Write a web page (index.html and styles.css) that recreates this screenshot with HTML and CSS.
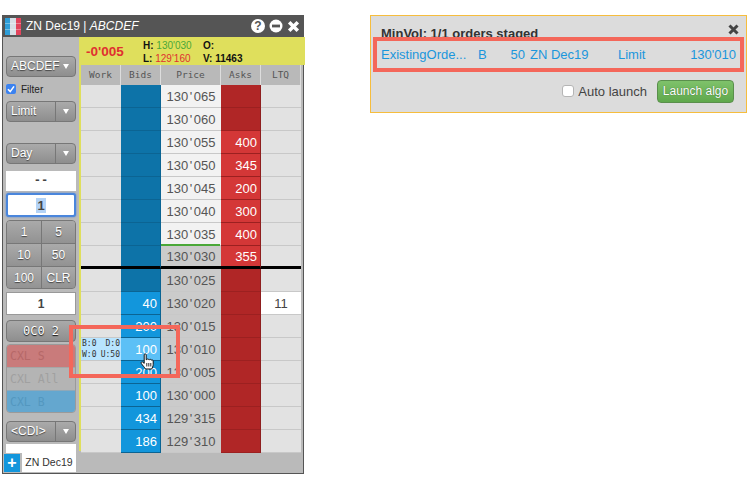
FILE: index.html
```html
<!DOCTYPE html>
<html lang="en">
<head>
<meta charset="utf-8">
<title>ZN Dec19 MD Trader</title>
<link rel="stylesheet" href="styles.css">
</head>
<body>
<div class="window">
  <div class="titlebar">
    <svg class="logo" width="16" height="17" viewBox="0 0 16 17"><rect width="5" height="17" fill="#2f9ed8"/><rect x="5" width="6" height="17" fill="#d7dfe6"/><rect x="11" width="5" height="17" fill="#e2445c"/><rect y="5" width="16" height="1" fill="#fff" opacity=".35"/><rect y="11" width="16" height="1" fill="#fff" opacity=".35"/></svg>
    <span class="title">ZN Dec19 | <i>ABCDEF</i></span>
    <span class="winbtns">
      <span class="wb">?</span>
      <svg width="14" height="14" viewBox="0 0 14 14"><circle cx="7" cy="7" r="6.5" fill="#fff"/><rect x="3" y="5.6" width="8" height="2.8" fill="#555"/></svg>
      <svg width="13" height="13" viewBox="0 0 13 13"><path d="M2.200 2.200 L10.800 10.800 M10.800 2.200 L2.200 10.800" stroke="#fff" stroke-width="3.500"/></svg>
    </span>
  </div>
  <div class="main">
    <aside class="side">
      <div class="btn dd wide">ABCDEF <span class="caret"></span></div>
      <label class="filter"><span class="check"><svg width="10" height="10" viewBox="0 0 10 10"><path d="M2 5.2 L4.2 7.6 L8 2.4" stroke="#fff" stroke-width="1.6" fill="none"/></svg></span>Filter</label>
      <div class="btn split s-limit"><span class="sl">Limit</span><span class="sr"><span class="caret"></span></span></div>
      <div class="btn split s-day"><span class="sl">Day</span><span class="sr"><span class="caret"></span></span></div>
      <div class="field dash">--</div>
      <div class="field qty"><span class="sel">1</span></div>
      <div class="pad">
        <span>1</span><span>5</span><span>10</span><span>50</span><span>100</span><span>CLR</span>
      </div>
      <div class="field total">1</div>
      <div class="btn oco">0C0 2</div>
      <div class="cxl">
        <span class="cs">CXL S</span><span class="ca">CXL All</span><span class="cb">CXL B</span>
      </div>
      <div class="btn split s-cdi"><span class="sl">&lt;CDI&gt;</span><span class="sr"><span class="caret"></span></span></div>
      <div class="tabtop"></div>
    </aside>
    <div class="stripe"></div>
    <div class="ladder">
      <div class="info">
        <div class="ltp">-0'005</div>
        <div class="stats">
          <span><b>H:</b> <em class="g">130'030</em></span><span><b>O:</b></span>
          <span><b>L:</b> <em class="r">129'160</em></span><span><b>V: 11463</b></span>
        </div>
      </div>
      <div class="row head"><div>Work</div><div>Bids</div><div>Price</div><div>Asks</div><div>LTQ</div></div>
      <div class="row"><div class="w"></div><div class="b"></div><div class="p up">130<i>'</i>065</div><div class="a"></div><div class="l"></div></div>
      <div class="row"><div class="w"></div><div class="b"></div><div class="p up">130<i>'</i>060</div><div class="a"></div><div class="l"></div></div>
      <div class="row"><div class="w"></div><div class="b"></div><div class="p up">130<i>'</i>055</div><div class="a on">400</div><div class="l"></div></div>
      <div class="row"><div class="w"></div><div class="b"></div><div class="p up">130<i>'</i>050</div><div class="a on">345</div><div class="l"></div></div>
      <div class="row"><div class="w"></div><div class="b"></div><div class="p up">130<i>'</i>045</div><div class="a on">200</div><div class="l"></div></div>
      <div class="row"><div class="w"></div><div class="b"></div><div class="p up">130<i>'</i>040</div><div class="a on">300</div><div class="l"></div></div>
      <div class="row"><div class="w"></div><div class="b"></div><div class="p up">130<i>'</i>035</div><div class="a on">400</div><div class="l"></div></div>
      <div class="row mid"><div class="w"></div><div class="b"></div><div class="p high">130<i>'</i>030</div><div class="a on">355</div><div class="l"></div></div>
      <div class="row"><div class="w"></div><div class="b"></div><div class="p">130<i>'</i>025</div><div class="a"></div><div class="l"></div></div>
      <div class="row"><div class="w"></div><div class="b on">40</div><div class="p">130<i>'</i>020</div><div class="a"></div><div class="l last">11</div></div>
      <div class="row"><div class="w"></div><div class="b on">200</div><div class="p">130<i>'</i>015</div><div class="a"></div><div class="l"></div></div>
      <div class="row"><div class="w tip"><span>B:0</span><span>D:0</span><span>W:0</span><span>U:50</span></div><div class="b on hov">100</div><div class="p">130<i>'</i>010</div><div class="a"></div><div class="l"></div></div>
      <div class="row"><div class="w"></div><div class="b on">200</div><div class="p">130<i>'</i>005</div><div class="a"></div><div class="l"></div></div>
      <div class="row"><div class="w"></div><div class="b on">100</div><div class="p">130<i>'</i>000</div><div class="a"></div><div class="l"></div></div>
      <div class="row"><div class="w"></div><div class="b on">434</div><div class="p">129<i>'</i>315</div><div class="a"></div><div class="l"></div></div>
      <div class="row"><div class="w"></div><div class="b on">186</div><div class="p">129<i>'</i>310</div><div class="a"></div><div class="l"></div></div>
      <svg class="hand" width="15" height="18" viewBox="0 0 15 18"><path d="M4.2 1.8c0-1.2 2-1.2 2 0v5l.6-.2c.3-1 1.8-.9 2 .1l.5.1c.4-.8 1.8-.6 1.9.4.5-.6 2-.3 2 .8v3.4c0 2-1 3.4-1.5 4.6H5.4C4.6 14.200 2.600 12.500 1.300 10.500c-.7-1.200.6-2.200 1.600-1.300l1.300 1.200z" fill="#fff" stroke="#111" stroke-width="1"/><path d="M6.800 10v3.500M8.800 10v3.500M10.800 10v3.500" stroke="#111" stroke-width=".9"/></svg>
      <div class="callout"></div>
    </div>
  </div>
  <div class="footer">
    <span class="plus">+</span>
    <span class="tab">ZN Dec19</span>
  </div>
</div>
<section class="panel">
  <svg class="close" width="11" height="11" viewBox="0 0 11 11"><path d="M1.500 1.500 L9.500 9.500 M9.500 1.500 L1.500 9.500" stroke="#444" stroke-width="3"/></svg>
  <h2>MinVol: 1/1 orders staged</h2>
  <div class="order">
    <span>ExistingOrde...</span><span>B</span><span class="n">50</span><span>ZN Dec19</span><span>Limit</span><span class="n">130'010</span>
  </div>
  <div class="actions">
    <label class="auto"><span class="box"></span>Auto launch</label>
    <span class="launch">Launch algo</span>
  </div>
  <div class="mark"></div>
</section>
</body>
</html>
```

FILE: styles.css
```css
* { box-sizing: border-box; }
html, body { margin: 0; padding: 0; background: #fff; }
body {
  width: 749px; height: 488px; overflow: hidden;
  display: flex; align-items: flex-start;
  padding: 15px 0 0 2px;
  font-family: "Liberation Sans", Arial, sans-serif;
  font-size: 13px; color: #444;
}
.window {
  width: 302px; height: 459px; flex: none;
  border: 1px solid #555; border-top: 0;
  background: #bababa;
  display: flex; flex-direction: column;
}
.titlebar {
  height: 22px; background: #555; color: #fff;
  display: flex; align-items: center;
  margin: 0 -1px; padding: 0 4px 0 3px; flex: none;
}
.logo { display: block; }
.title { margin-left: 5px; font-size: 12px; }
.winbtns { margin-left: auto; display: flex; align-items: center; gap: 4px; }
.wb {
  width: 14px; height: 14px; border-radius: 50%; background: #fff; color: #555;
  font-weight: bold; font-size: 12px; line-height: 14px; text-align: center;
}
.main { display: flex; height: 416px; flex: none; }
.side {
  width: 76px; flex: none; padding: 19px 3px 0 3px;
  display: flex; flex-direction: column;
}
.btn {
  height: 21px; border: 1px solid #777; border-radius: 4px;
  background: linear-gradient(#aaa, #8e8e8e);
  color: #fff; text-shadow: 0 1px 1px #444;
  font-size: 12px; line-height: 19px; flex: none;
}
.dd { display: flex; align-items: center; justify-content: space-between; padding: 0 6px 0 4px; }
.caret {
  display: block; width: 0; height: 0;
  border-left: 3.500px solid transparent; border-right: 3.500px solid transparent;
  border-top: 5px solid #fff;
}
.filter { display: flex; align-items: center; height: 14px; margin-top: 5px; font-size: 10px; color: #222; }
.check {
  width: 10px; height: 10px; background: #3b82f0; border-radius: 2px; margin-right: 5px;
  display: block;
}
.check svg { display: block; }
.split { display: flex; }
.sl { flex: 1; padding-left: 4px; border-right: 1px solid #777; }
.sr { width: 19px; display: flex; align-items: center; justify-content: center; }
.s-limit { margin-top: 5px; }
.s-day { margin-top: 21px; }
.s-cdi { margin-top: 8px; }
.field {
  background: #fff; text-align: center; flex: none; color: #444;
}
.dash { height: 20px; margin-top: 7px; line-height: 20px; font-family: "Liberation Mono", monospace; font-weight: bold; font-size: 12px; }
.qty {
  height: 24px; margin-top: 2px; border: 2px solid #4a86dc; border-radius: 3px;
  box-shadow: 0 0 2px #4a86dc; line-height: 21px; font-weight: bold; font-size: 13px;
}
.sel { background: #b4d3f6; padding: 0 1px; }
.pad {
  height: 69px; margin-top: 3px; flex: none;
  display: grid; grid-template-columns: 35px 33px; grid-auto-rows: 23px;
  border: 1px solid #777; border-radius: 4px; overflow: hidden;
  background: linear-gradient(#a2a2a2, #8e8e8e);
}
.pad span {
  text-align: center; line-height: 23px; color: #fff; font-size: 12px;
  text-shadow: 0 1px 1px #444;
  border-right: 1px solid #777; border-bottom: 1px solid #777;
  background: linear-gradient(#aaa, #929292);
}
.pad span:nth-child(2n) { border-right: 0; }
.total { height: 23px; margin-top: 3px; line-height: 22px; border: 1px solid #999; font-weight: bold; font-size: 12px; }
.oco {
  margin-top: 5px; height: 22px; text-align: center;
  font-family: "DejaVu Sans Mono", monospace; font-size: 12px; line-height: 20px;
  text-shadow: 0 1px 1px #111;
}
.cxl {
  height: 69px; margin-top: 2px; flex: none; border-radius: 4px; overflow: hidden;
  display: flex; flex-direction: column; border: 1px solid #9a9a9a;
  font-family: "DejaVu Sans Mono", monospace; font-size: 11.500px;
}
.cxl span { flex: 1; line-height: 22px; padding-left: 3px; }
.cs { background: #c97b7b; color: #b66868; }
.ca { background: #b4b4b4; color: #a0a0a0; border-top: 1px solid #a6a6a6; border-bottom: 1px solid #8fa8b8; }
.cb { background: #64a7cf; color: #5397bf; }
.tabtop { height: 9px; margin-top: 2px; background: #fff; flex: none; }
.stripe { width: 2px; background: #dfdf5c; height: 414px; flex: none; }
.ladder { width: 222px; flex: none; position: relative; }
.info {
  height: 28px; margin-right: -2px; background: #dfdf5c;
  display: flex; align-items: center; padding-left: 5px;
}
.ltp { color: #e03030; font-weight: bold; font-size: 13.500px; width: 57px; }
.stats {
  display: grid; grid-template-columns: 60px auto; line-height: 13px;
  font-size: 10px; color: #111; margin-top: 2px;
}
.stats em { font-style: normal; font-weight: normal; }
.g { color: #4aa838; }
.r { color: #e03030; }
.row {
  display: grid; grid-template-columns: 40px 40px 60px 40px 40px;
  grid-template-rows: 23px;
  height: 23px;
}
.row > div { height: 23px; border-bottom: 1px solid #c8c8c8; text-align: right; line-height: 23px; }
.head { height: 20px; grid-template-rows: 20px; }
.row.head > div {
  height: 20px;
  background: #b9b9b9; border-right: 1px solid #ddd; border-bottom: 0;
  text-align: center; line-height: 19px;
  font-family: "DejaVu Sans Mono", monospace; font-size: 9.500px; color: #555;
}
.w, .l { background: #e2e2e2; }
.row > .l { text-align: center; }
.row > .l.last { background: #fff; color: #444; }
.row > .b { background: #0d73a8; border-bottom-color: #0b6493; border-right: 1px solid #0b6493; color: #fff; padding-right: 3px; }
.row > .b.on { background: #1296dc; }
.row > .b.hov { background: #5cc0f6; }
.row > .p {
  background: #cbcbcb; text-align: center; color: #555;
  font-size: 13px;
}
.p i { font-style: normal; margin: 0 1.500px; }
.row > .p.up { background: #f2f2f2; }
.row > .a { background: #b02626; border-bottom-color: #9c2020; border-right: 1px solid #8e1e1e; color: #fff; padding-right: 3px; }
.row > .a.on { background: #d43737; }
.row.mid > div { border-bottom: 3px solid #000; line-height: 22px; }
.row.mid > .p { position: relative; }
.row.mid > .p::before {
  content: ""; position: absolute; left: 0; right: 1px; top: -2px; height: 2px; background: #4aa838;
}
.row > .tip {
  background: #b8e4ff; display: grid; grid-template-columns: auto auto; justify-content: space-between;
  align-content: center; padding: 0 1px; text-align: left;
  font-family: "DejaVu Sans Mono", monospace; font-size: 8px; line-height: 11px; color: #333;
}
.tip span:nth-child(2n) { text-align: right; }
.hand { position: absolute; left: 59px; top: 316px; }
.callout {
  position: absolute; left: -12px; top: 288px; width: 111px; height: 53px;
  border: 4px solid #f4675a;
}
.footer { position: relative; height: 21px; flex: none; display: flex; align-items: flex-start; padding-left: 1px; }
.plus {
  width: 16px; height: 18px; margin-top: 1px; background: #1296dc; color: #fff;
  font-weight: bold; text-align: center; line-height: 17px; font-size: 16px;
}
.tab {
  margin-left: 2px; width: 54px; height: 19px; background: #fff; color: #333;
  font-size: 10.500px; line-height: 19px; text-align: center; white-space: nowrap;
}
.panel {
  position: relative; flex: none;
  width: 377px; height: 98px; margin-left: 66px;
  background: #dcdcdc; border: 1px solid #f6bd3d;
}
.panel h2 { margin: 10px 0 0 10px; font-size: 13px; line-height: 16px; color: #333; }
.close { position: absolute; right: 7px; top: 8px; }
.order {
  display: grid; grid-template-columns: 97px 20px 27px 93px 72px 46px;
  margin: 4px 0 0 10px; height: 18px; line-height: 18px;
  color: #1a96dc; font-size: 13px; white-space: nowrap;
}
.order .n { text-align: right; }
.order span:nth-child(4) { padding-left: 5px; }
.actions { display: flex; align-items: center; position: absolute; right: 12px; top: 64px; height: 22px; }
.auto { display: flex; align-items: center; color: #444; font-size: 13px; }
.box { width: 12px; height: 12px; background: #fff; border: 1px solid #b5b5b5; border-radius: 3px; margin-right: 4px; }
.launch {
  margin-left: 10px; width: 77px; height: 23px; border: 1px solid #5a8f4c; border-radius: 4px;
  background: linear-gradient(#7fc26b, #5fa84c); color: #fff; text-align: center;
  font-size: 12px; line-height: 21px; text-shadow: 0 0 1px #2c5a20;
}
.mark {
  position: absolute; left: 2px; top: 21px; width: 371px; height: 35px;
  border: 4px solid #f4675a;
}
```
